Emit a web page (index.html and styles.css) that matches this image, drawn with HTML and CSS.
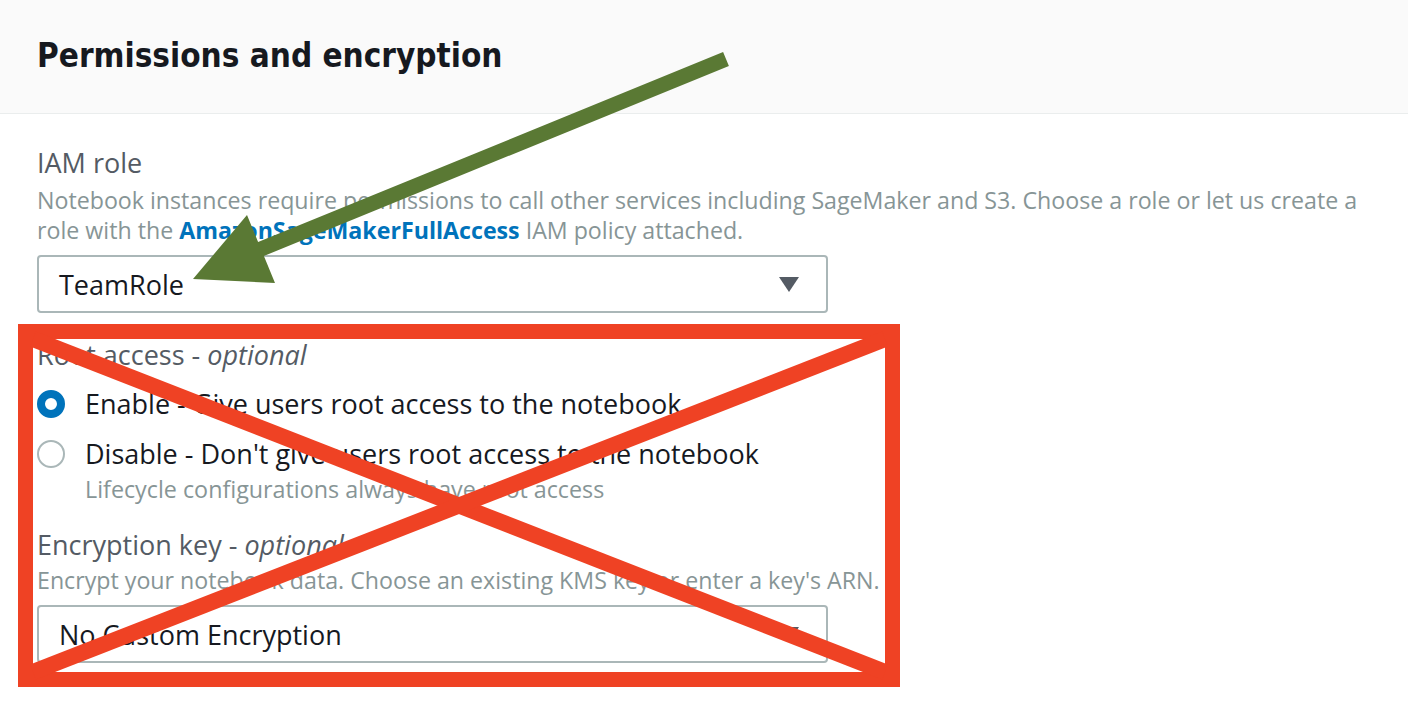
FILE: index.html
```html
<!DOCTYPE html>
<html lang="en">
<head>
<meta charset="utf-8">
<title>Permissions and encryption</title>
<link rel="stylesheet" href="styles.css">
</head>
<body>
<div class="page">
  <div class="panel-header">
    <h2 class="panel-title">Permissions and encryption</h2>
  </div>
  <div class="panel-body">
    <div class="field">
      <div class="field-label">IAM role</div>
      <div class="field-desc">Notebook instances require permissions to call other services including SageMaker and S3. Choose a role or let us create a role with the <a class="link" href="#">AmazonSageMakerFullAccess</a> IAM policy attached.</div>
      <div class="select">
        <span class="select-value">TeamRole</span>
        <span class="caret"></span>
      </div>
    </div>

    <div class="field field-root">
      <div class="field-label">Root access - <em>optional</em></div>
      <div class="radio-row">
        <span class="radio radio-checked"></span>
        <span class="radio-text">Enable - Give users root access to the notebook</span>
      </div>
      <div class="radio-row radio-row-2">
        <span class="radio"></span>
        <div class="radio-body">
          <span class="radio-text">Disable - Don't give users root access to the notebook</span>
          <span class="radio-hint">Lifecycle configurations always have root access</span>
        </div>
      </div>
    </div>

    <div class="field field-enc">
      <div class="field-label">Encryption key - <em>optional</em></div>
      <div class="field-desc">Encrypt your notebook data. Choose an existing KMS key or enter a key's ARN.</div>
      <div class="select">
        <span class="select-value">No Custom Encryption</span>
        <span class="caret"></span>
      </div>
    </div>
  </div>

  <svg class="annotations" width="1408" height="718" viewBox="0 0 1408 718" aria-hidden="true">
    <rect x="25.5" y="331.5" width="867" height="348" fill="none" stroke="#ef4224" stroke-width="15"/>
    <line x1="33" y1="339" x2="885" y2="672" stroke="#ef4224" stroke-width="16"/>
    <line x1="885" y1="339" x2="33" y2="672" stroke="#ef4224" stroke-width="16"/>
    <polygon fill="#5a7934" points="723.1,52.1 728.9,65.9 263.9,255.9 275,283 193,279 247,215 258.1,242.1"/>
  </svg>
</div>
</body>
</html>
```
FILE: styles.css
```css
* { box-sizing: border-box; }

html, body {
  margin: 0;
  padding: 0;
  background: #ffffff;
}

body {
  font-family: "Open Sans", "Liberation Sans", Arial, sans-serif;
  color: #16191f;
}

.page {
  position: relative;
  width: 1408px;
  height: 718px;
  overflow: hidden;
}

.panel-header {
  background: #fafafa;
  height: 114px;
  border-bottom: 1px solid #eaeded;
  padding: 35px 37px 0;
}

.panel-title {
  margin: 0;
  font-family: "DejaVu Sans Condensed", "Liberation Sans", Arial, sans-serif;
  font-size: 33px;
  line-height: 42px;
  font-weight: 700;
  color: #16191f;
}

.panel-body {
  padding: 34px 37px 0;
}

.field-label {
  font-size: 27px;
  line-height: 30px;
  color: #545b64;
}

.field-label em {
  font-style: italic;
}

.field-desc {
  margin-top: 7px;
  font-size: 23.2px;
  line-height: 30px;
  color: #879596;
  max-width: 1345px;
}

.link {
  color: #0073bb;
  font-weight: 700;
  text-decoration: none;
}

.select {
  margin-top: 10px;
  width: 791px;
  height: 58px;
  border: 2px solid #aab7b8;
  border-radius: 4px;
  display: flex;
  align-items: center;
  justify-content: space-between;
  padding: 0 27px 0 20px;
}

.select-value {
  font-size: 27px;
  color: #16191f;
}

.caret {
  width: 0;
  height: 0;
  border-left: 10px solid transparent;
  border-right: 10px solid transparent;
  border-top: 15px solid #545b64;
}

.field-root {
  margin-top: 27px;
}

.radio-row {
  display: flex;
  align-items: flex-start;
  margin-top: 16px;
}

.radio-row-2 {
  margin-top: 14px;
}

.radio {
  flex: none;
  width: 28px;
  height: 28px;
  border-radius: 50%;
  border: 2px solid #aab7b8;
  margin-top: 4px;
  margin-right: 20px;
  background: #fff;
}

.radio-checked {
  border: 8px solid #0073bb;
}

.radio-body {
  display: flex;
  flex-direction: column;
}

.radio-text {
  font-size: 27px;
  line-height: 36px;
  color: #16191f;
}

.radio-hint {
  font-size: 23.3px;
  line-height: 34px;
  color: #879596;
}

.field-enc {
  margin-top: 24px;
}

.field-enc .field-desc {
  margin-top: 5px;
}

.annotations {
  position: absolute;
  left: 0;
  top: 0;
  pointer-events: none;
}
```
